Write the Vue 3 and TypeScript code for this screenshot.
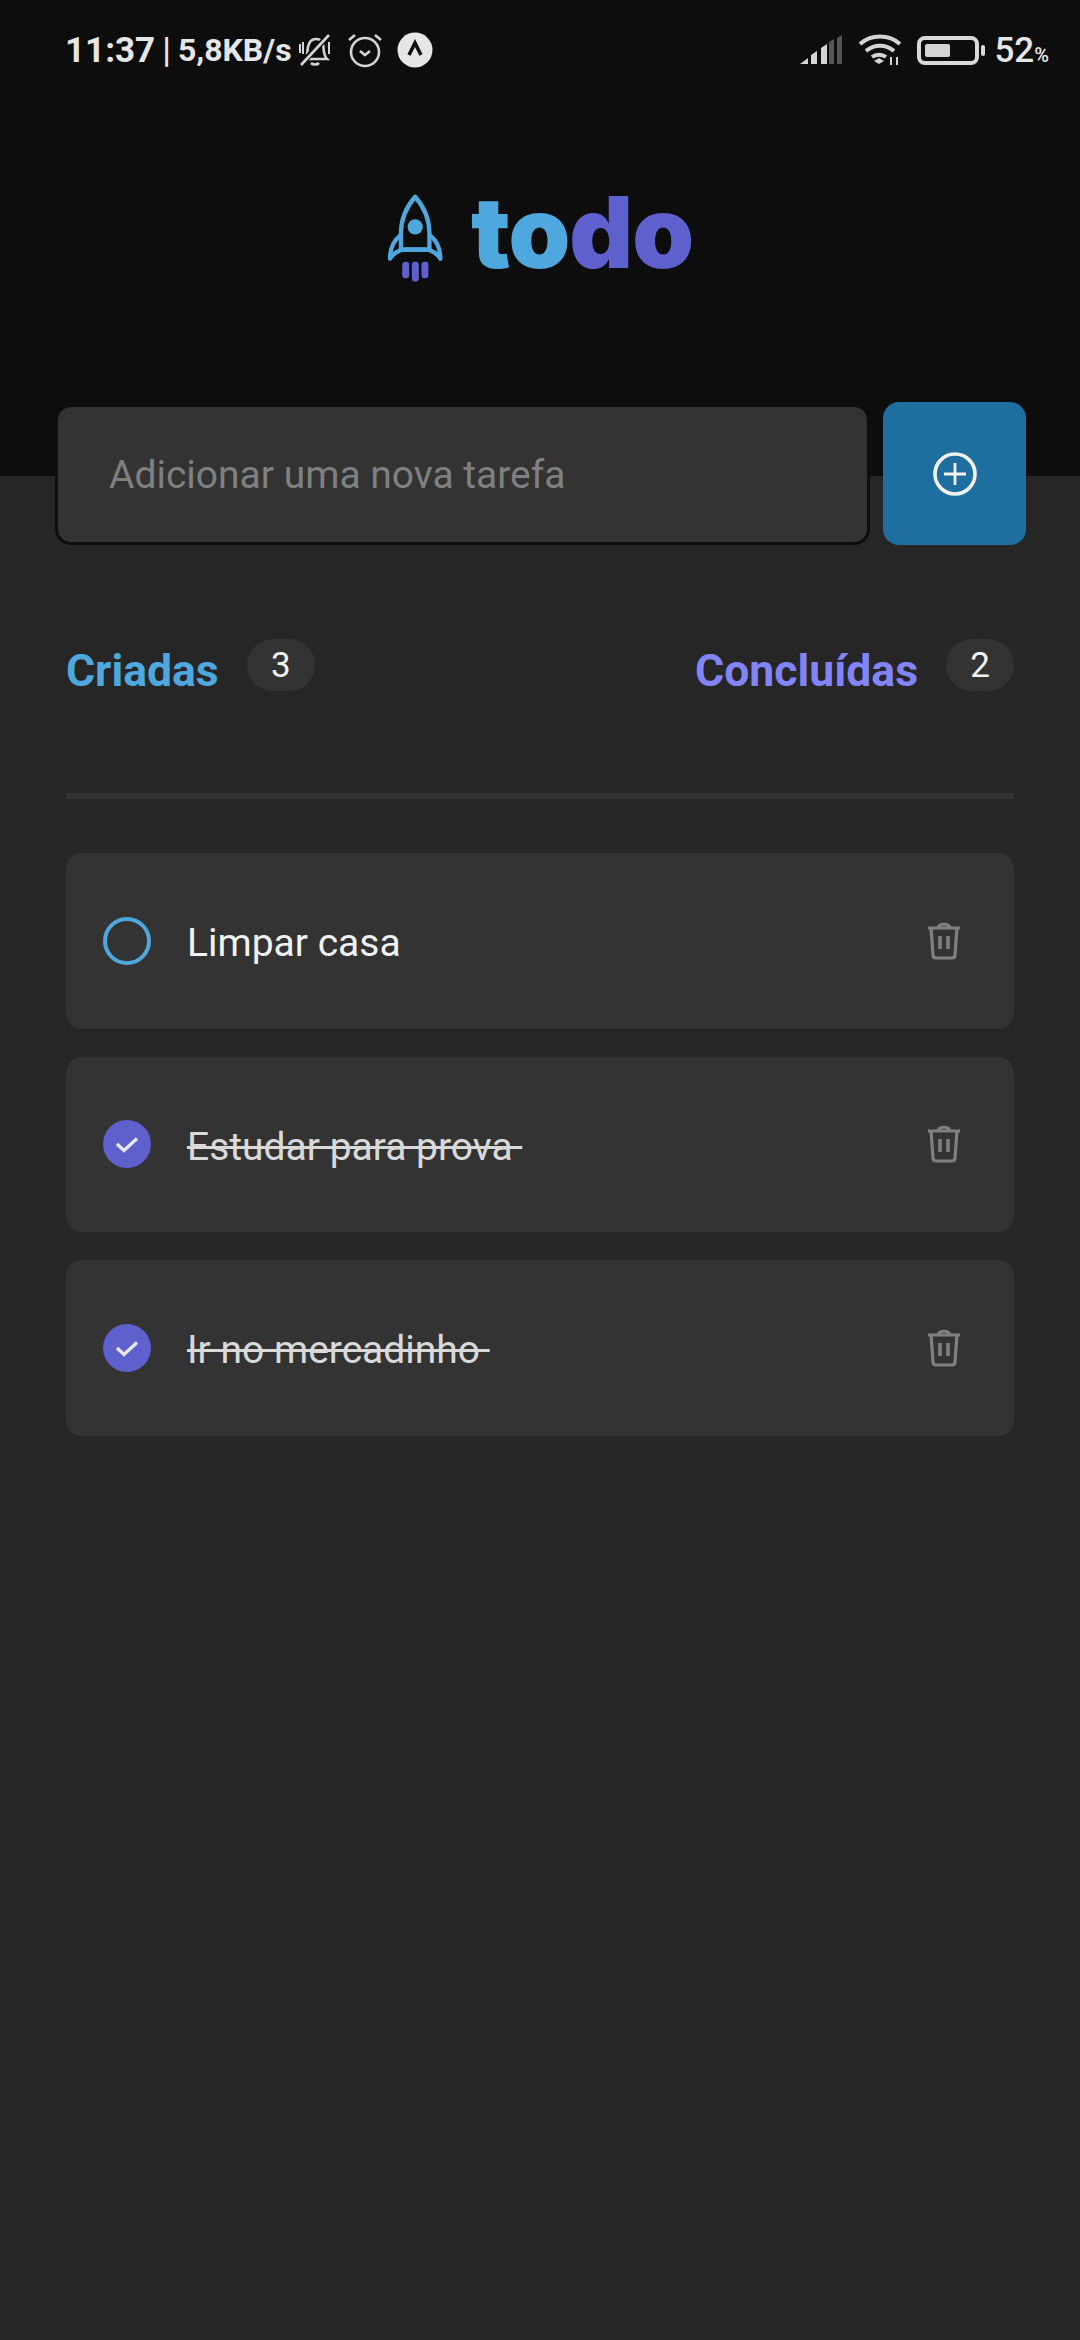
<script setup lang="ts">
interface Task {
    id: number;
    title: string;
    done: boolean;
}

const tasks: Task[] = [
    { id: 1, title: "Limpar casa", done: false },
    { id: 2, title: "Estudar para prova ", done: true },
    { id: 3, title: "Ir no mercadinho ", done: true },
];

const doneCount = tasks.filter((task) => task.done).length;
</script>

<template>
    <div class="page">
        <header class="top">
            <div class="status">
                <span class="clock">11:37</span>
                <span class="sep">|</span>
                <span class="speed">5,8KB/s</span>
                <svg class="bell" width="36" height="36" viewBox="0 0 36 36" fill="none" stroke="#d4d4d4" stroke-width="2.6">
                    <path d="M8 27c3-3 2-7 3-12 1-5 4-8 8-8 3 0 6 2 7 5 1 4 0 11 4 15z" />
                    <path d="M14 31c2 2 6 2 8 0" />
                    <path d="M3 12v9M6 10v12M32 10v12" stroke-width="2" />
                    <path d="M3 33 32 3" stroke="#0d0d0d" stroke-width="6" />
                    <path d="M4 33 32 3" />
                </svg>
                <svg class="alarm" width="36" height="36" viewBox="0 0 36 36" fill="none" stroke="#d4d4d4" stroke-width="2.6">
                    <circle cx="18" cy="20" r="14" />
                    <path d="m13 19 5 4 5-4M2 8l6-5M34 8l-6-5" />
                </svg>
                <svg class="app-dot" width="36" height="36" viewBox="0 0 36 36">
                    <circle cx="18" cy="18" r="17.5" fill="#e6e6e6" />
                    <path d="m12 23 6-12 6 12" fill="none" stroke="#0d0d0d" stroke-width="3.6" />
                </svg>
                <span class="spacer"></span>
                <svg class="signal" width="42" height="30" viewBox="0 0 42 30">
                    <path d="M0 29 8 23v6zM11 20l6-4v13h-6zM21 13l6-4v20h-6z" fill="#d4d4d4" />
                    <path d="M29 7l5-3v25h-5zM37 3l5-3v29h-5z" fill="#555" />
                </svg>
                <svg class="wifi" width="44" height="32" viewBox="0 0 44 32" fill="none" stroke="#d4d4d4" stroke-width="4">
                    <path d="M2 10c11-10 29-10 40 0M8 17c8-7 20-7 28 0M14 23c4-3 10-3 14 0" />
                    <path d="m16 27 5-3 5 3-5 3z" fill="#d4d4d4" stroke="none" />
                    <path d="M33 23v8M39 23v8" stroke-width="2" />
                </svg>
                <span class="battery"><span class="level"></span></span>
                <span class="nub"></span>
                <span class="percent">52<small>%</small></span>
            </div>
            <div class="logo">
                <svg class="rocket" width="63" height="97" viewBox="70 60 190 292" fill="none">
                    <path d="M161 80c-26 30-43 70-43 110v50h86v-50c0-40-17-80-43-110z" stroke="#4ea8de" stroke-width="13" stroke-linejoin="round" />
                    <path d="M118 195c-20 15-33 35-33 72 8-14 26-28 47-28h58c21 0 39 14 47 28 0-37-13-57-33-72" stroke="#4ea8de" stroke-width="13" stroke-linejoin="round" />
                    <circle cx="161" cy="171" r="23" fill="#4ea8de" />
                    <rect x="122" y="276" width="21" height="50" rx="9" fill="#5e60ce" />
                    <rect x="151" y="276" width="21" height="60" rx="9" fill="#5e60ce" />
                    <rect x="180" y="276" width="21" height="50" rx="9" fill="#5e60ce" />
                </svg>
                <span class="word"><span class="to">to</span><span class="do">do</span></span>
            </div>
        </header>

        <main class="content">
            <form class="add" @submit.prevent>
                <input class="field" type="text" placeholder="Adicionar uma nova tarefa" />
                <button class="plus" type="button" aria-label="Adicionar">
                    <svg width="44" height="44" viewBox="0 0 44 44" fill="none" stroke="#f2f2f2">
                        <circle cx="22" cy="22" r="20" stroke-width="3.6" />
                        <path d="M22 11v22M11 22h22" stroke-width="2.8" />
                    </svg>
                </button>
            </form>

            <section class="counts">
                <div class="count">
                    <strong class="created">Criadas</strong>
                    <span class="badge">{{ tasks.length }}</span>
                </div>
                <div class="count">
                    <strong class="finished">Concluídas</strong>
                    <span class="badge">{{ doneCount }}</span>
                </div>
            </section>

            <hr class="rule" />

            <ul class="list">
                <li v-for="task in tasks" :key="task.id" class="task">
                    <svg v-if="task.done" class="check" width="48" height="48" viewBox="0 0 48 48">
                        <circle cx="24" cy="24" r="24" fill="#5e60ce" />
                        <path d="m14 24 7 6.5 13-12" fill="none" stroke="#e6e6f5" stroke-width="3.4" />
                    </svg>
                    <svg v-else class="check" width="48" height="48" viewBox="0 0 48 48">
                        <circle cx="24" cy="24" r="22" fill="none" stroke="#4ea8de" stroke-width="4" />
                    </svg>
                    <span class="title" :class="{ done: task.done }">{{ task.title }}</span>
                    <svg class="trash" width="36" height="40" viewBox="0 0 36 40" fill="none" stroke="#808080" stroke-width="3.2" stroke-linejoin="round">
                        <path d="M2 7h32M12 7c1-5 11-5 12 0" />
                        <path d="m5 7 2 27c0 2 1 3 3 3h16c2 0 3-1 3-3l2-27" />
                        <path d="M14 15v13M22 15v13" stroke-width="3.6" />
                    </svg>
                </li>
            </ul>
        </main>
    </div>
</template>

<style>
html,
body {
    margin: 0;
    background: #262626;
}
</style>

<style scoped>
.page {
    width: 1080px;
    height: 2340px;
    overflow: hidden;
    background: #262626;
    font-family: Roboto, "Liberation Sans", sans-serif;
    color: #f2f2f2;
}

.top {
    height: 476px;
    background: #0d0d0d;
}

.status {
    height: 100px;
    display: flex;
    align-items: center;
    padding: 0 31px 0 65px;
    color: #e6e6e6;
    box-sizing: border-box;
}

.clock {
    font-size: 35px;
    font-weight: 700;
}

.speed {
    font-size: 32px;
    font-weight: 700;
}

.sep {
    margin: 0 7px;
    font-size: 35px;
    font-weight: 500;
}

.bell {
    margin-left: 5px;
}

.alarm {
    margin-left: 14px;
}

.app-dot {
    margin-left: 14px;
}

.spacer {
    flex: 1;
}

.wifi {
    margin-left: 16px;
}

.battery {
    width: 62px;
    height: 29px;
    margin-left: 15px;
    padding: 4px;
    box-sizing: border-box;
    border: 4px solid #d9d9d9;
    border-radius: 8px;
}

.level {
    display: block;
    width: 25px;
    height: 100%;
    background: #d4d4d4;
    border-radius: 2px;
}

.nub {
    width: 4px;
    height: 11px;
    margin-left: 2px;
    background: #d9d9d9;
    border-radius: 2px;
}

.percent {
    margin-left: 9px;
    font-size: 35px;
    font-weight: 500;
}

.percent small {
    font-size: 20px;
}

.logo {
    display: flex;
    align-items: flex-start;
    justify-content: center;
    gap: 23px;
    margin-top: 84px;
    padding-right: 2px;
}

.rocket {
    margin-top: 6px;
}

.word {
    font-family: Inter, Roboto, sans-serif;
    font-size: 99px;
    font-weight: 900;
    line-height: 97px;
    letter-spacing: -1px;
}

.to {
    color: #4ea8de;
}

.do {
    color: #5e60ce;
}

.content {
    padding: 0 66px;
}

.add {
    display: flex;
    gap: 13px;
    margin: -74px -12px 0 -11px;
    align-items: flex-end;
}

.field {
    flex: 1;
    min-width: 0;
    height: 141px;
    padding: 0 51px;
    box-sizing: border-box;
    background: #333;
    border: 3px solid #0d0d0d;
    border-radius: 16px;
    font: 400 39px Roboto, sans-serif;
    color: #f2f2f2;
    outline: none;
}

.field::placeholder {
    color: #808080;
    opacity: 1;
}

.plus {
    width: 143px;
    height: 143px;
    display: flex;
    align-items: center;
    justify-content: center;
    padding: 0;
    background: #1e6f9f;
    border: 0;
    border-radius: 16px;
}

.counts {
    display: flex;
    justify-content: space-between;
    margin-top: 94px;
}

.count {
    display: flex;
    align-items: flex-start;
    gap: 28px;
}

.count strong {
    margin-top: 6px;
    font-size: 44.5px;
    font-weight: 700;
    line-height: 52px;
}

.created {
    color: #4ea8de;
}

.finished {
    color: #8284fa;
}

.badge {
    width: 68px;
    height: 52px;
    display: flex;
    align-items: center;
    justify-content: center;
    background: #333;
    border-radius: 26px;
    font-size: 35px;
    color: #f2f2f2;
}

.rule {
    height: 6px;
    margin: 96px 0 0;
    border: 0;
    background: #333;
}

.list {
    display: flex;
    flex-direction: column;
    gap: 28px;
    margin: 54px 0 0;
    padding: 0;
    list-style: none;
}

.task {
    height: 175.5px;
    display: flex;
    align-items: center;
    padding: 0 52px 0 37px;
    background: #333;
    border-radius: 16px;
}

.title {
    flex: 1;
    margin-left: 36px;
    padding-top: 5px;
    font-size: 39px;
    white-space: pre;
    color: #f2f2f2;
}

.title.done {
    color: #d9d9d9;
    text-decoration: line-through;
}

.check {
    flex: none;
}
</style>
